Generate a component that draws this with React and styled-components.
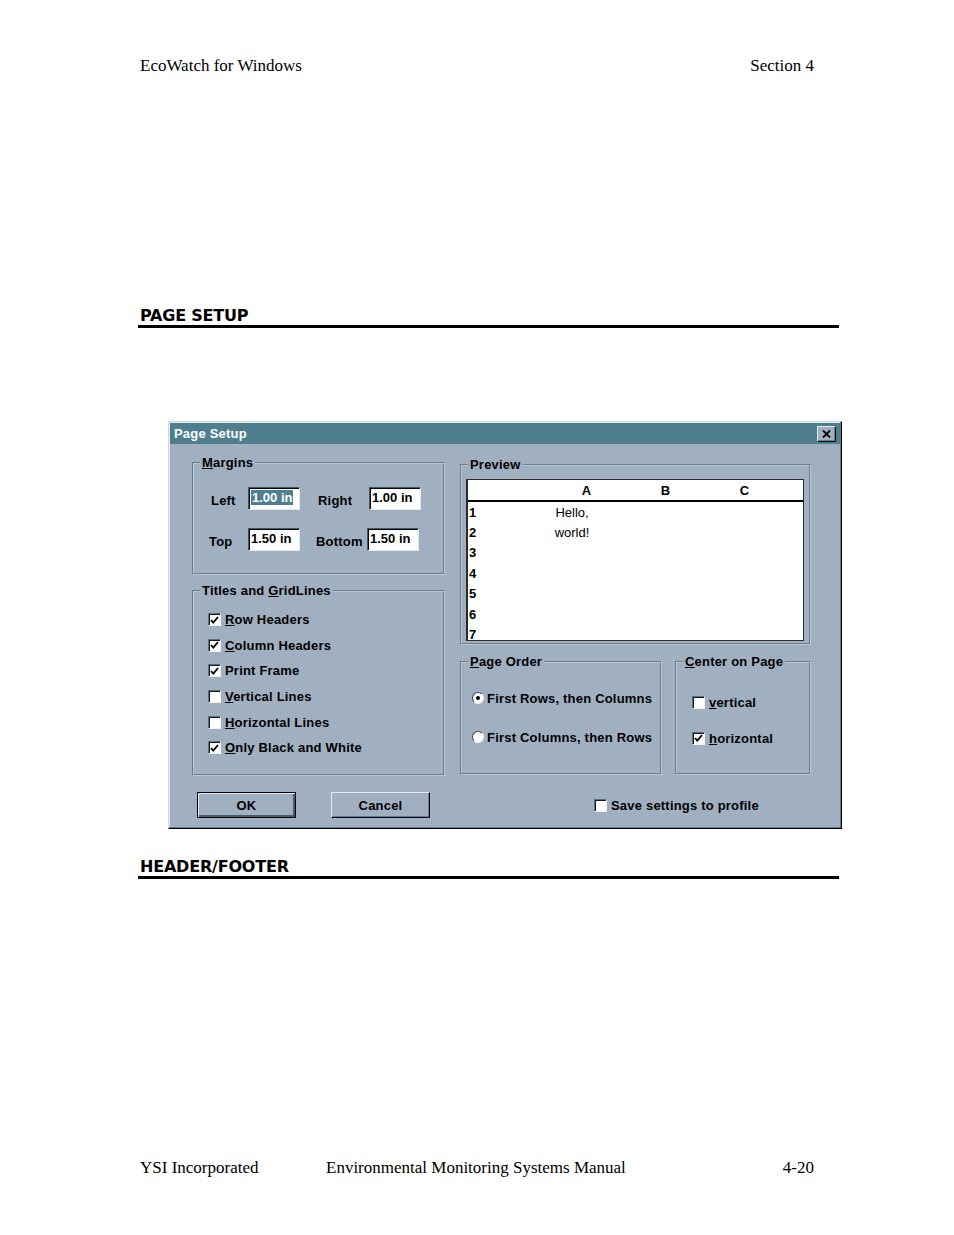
import React from "react";
import styled, { createGlobalStyle } from "styled-components";

const GlobalStyle = createGlobalStyle`
  html, body {
    margin: 0;
    padding: 0;
    background: #fff;
  }
`;

const FACE = "#a1b0c0";
const TITLE = "#4f7f8f";

const Page = styled.div`
  width: 954px;
  height: 1235px;
  box-sizing: border-box;
  padding: 56px 0 0 138px;
  background: #fff;
  color: #000;
  font-family: "Liberation Serif", "Times New Roman", serif;
  overflow: hidden;
`;

const RunningLine = styled.div`
  display: flex;
  width: 674px;
  margin: ${(p) => p.top || 0}px 0 0 2px;
  font-size: 17px;
  line-height: 20px;
  span:first-child {
    width: ${(p) => (p.wide ? "186px" : "auto")};
  }
  span:last-child {
    margin-left: auto;
  }
`;

const SectionHeading = styled.h2`
  width: 701px;
  box-sizing: border-box;
  margin: ${(p) => p.top}px 0 0 0;
  padding: 1px 0 0 2px;
  font: bold 16px/19px "DejaVu Sans", Verdana, sans-serif;
  letter-spacing: -0.2px;
  border-bottom: 3px solid #000;
`;

const Dialog = styled.div`
  width: 674px;
  height: 408px;
  box-sizing: border-box;
  margin: 93px 0 0 30px;
  padding: 1px;
  background: ${FACE};
  border: 1px solid;
  border-color: #cdd8e0 #000 #000 #cdd8e0;
  box-shadow: inset -1px -1px 0 #56808f, inset 1px 1px 0 #e6edf1;
  display: flex;
  flex-direction: column;
  font: bold 13px "Liberation Sans", Arial, sans-serif;
  letter-spacing: 0.2px;
  color: #000;
`;

const TitleBar = styled.div`
  height: 21px;
  flex: none;
  display: flex;
  align-items: center;
  padding: 0 4px;
  background: ${TITLE};
  color: #fff;
`;

const CloseButton = styled.div`
  margin-left: auto;
  width: 19px;
  height: 16px;
  box-sizing: border-box;
  background: ${FACE};
  border: 1px solid;
  border-color: #e4ebef #000 #000 #e4ebef;
  box-shadow: inset -1px -1px 0 #5f8493;
  display: flex;
  align-items: center;
  justify-content: center;
`;

const Body = styled.div`
  flex: 1;
  display: flex;
  flex-direction: column;
  padding: 11px 0 9px 22px;
`;

const Columns = styled.div`
  display: grid;
  grid-template-columns: 253px 351px;
  column-gap: 15px;
  height: 321px;
`;

const Stack = styled.div`
  display: flex;
  flex-direction: column;
  gap: ${(p) => p.gap}px;
  padding-top: ${(p) => p.offset || 0}px;
`;

const Pair = styled.div`
  display: flex;
  gap: 13px;
`;

const Group = styled.fieldset`
  margin: 0;
  padding: 0;
  min-width: 0;
  box-sizing: border-box;
  width: ${(p) => (p.w ? `${p.w}px` : "auto")};
  height: ${(p) => p.h}px;
  border: 2px groove #b4cad5;
`;

const Legend = styled.legend`
  margin-left: 6px;
  padding: 0 2px;
  line-height: 14px;
  font: inherit;
`;

const Inner = styled.div`
  padding: ${(p) => p.pad};
  display: flex;
  flex-direction: column;
  gap: ${(p) => p.gap || 0}px;
`;

const MarginGrid = styled.div`
  display: grid;
  grid-template-columns: 37px 70px 51px 52px;
  grid-auto-rows: 23px;
  row-gap: 18px;
  padding: 17px 0 0 17px;
`;

const FieldLabel = styled.span`
  padding-top: 6px;
  margin-left: ${(p) => p.shift || 0}px;
`;

const Field = styled.span`
  width: 52px;
  height: 23px;
  box-sizing: border-box;
  background: #fff;
  border: 1px solid;
  border-color: #3b5a66 #e3eaee #e3eaee #3b5a66;
  box-shadow: inset 1px 1px 0 #000;
  padding: 2px 0 0 2px;
  margin-left: ${(p) => p.shift || 0}px;
  line-height: 16px;
  letter-spacing: 0;
  white-space: nowrap;
  mark {
    background: ${TITLE};
    color: #fff;
    padding: 0 1px;
  }
`;

const Option = styled.div`
  display: flex;
  align-items: center;
  gap: ${(p) => p.gap || 4}px;
  height: ${(p) => p.h || 26}px;
  white-space: nowrap;
`;

const Box = styled.span`
  flex: none;
  width: 13px;
  height: 13px;
  box-sizing: border-box;
  background: #fff;
  border: 1px solid;
  border-color: #55737f #eef3f5 #eef3f5 #55737f;
  box-shadow: inset 1px 1px 0 #1a1a1a;
  display: flex;
  align-items: center;
  justify-content: center;
`;

const Radio = styled.span`
  flex: none;
  width: 12px;
  height: 12px;
  box-sizing: border-box;
  border-radius: 50%;
  background: #fff;
  border: 1px solid;
  border-color: #3a4a52 #eef3f5 #eef3f5 #3a4a52;
  display: flex;
  align-items: center;
  justify-content: center;
  &::after {
    content: "";
    width: 4px;
    height: 4px;
    border-radius: 50%;
    background: ${(p) => (p.on ? "#000" : "transparent")};
  }
`;

const Sheet = styled.div`
  margin: 7px 0 0 4px;
  width: 338px;
  height: 162px;
  box-sizing: border-box;
  background: #fff;
  border: 1px solid #2a2a2a;
  border-left-width: 2px;
  overflow: hidden;
  letter-spacing: 0;
`;

const SheetRow = styled.div`
  display: grid;
  grid-template-columns: 79px 79px 79px 79px 1fr;
  height: ${(p) => (p.head ? "20px" : "20.4px")};
  align-items: center;
  border-bottom: ${(p) => (p.head ? "2px solid #000" : "none")};
`;

const Cell = styled.span`
  text-align: ${(p) => (p.left ? "left" : "center")};
  padding-left: ${(p) => (p.left ? "1px" : "0")};
  padding-right: ${(p) => p.pr || 0}px;
  font-weight: ${(p) => (p.plain ? "normal" : "bold")};
`;

const Buttons = styled.div`
  display: flex;
  align-items: center;
  margin-top: 16px;
  padding-left: 5px;
`;

const Button = styled.div`
  width: 99px;
  height: 26px;
  box-sizing: border-box;
  display: flex;
  align-items: center;
  justify-content: center;
  margin-left: ${(p) => p.gap || 0}px;
  background: ${FACE};
  border: 1px solid;
  border-color: ${(p) =>
    p.primary ? "#000" : "#e4ebef #000 #000 #e4ebef"};
  box-shadow: ${(p) =>
    p.primary
      ? "inset 1px 1px 0 #e4ebef, inset -2px -2px 0 #3f5f6b"
      : "inset -1px -1px 0 #5f8493"};
`;

const SaveOption = styled(Option)`
  margin-left: 164px;
`;

const Check = () => (
  <svg width="9" height="8" viewBox="0 0 9 8">
    <polyline points="1,4 3.3,6.6 8,1" fill="none" stroke="#000" strokeWidth="1.8" />
  </svg>
);

const CheckBox = ({ on }) => <Box>{on && <Check />}</Box>;

const rows = [
  { n: "1", a: "Hello," },
  { n: "2", a: "world!" },
  { n: "3" },
  { n: "4" },
  { n: "5" },
  { n: "6" },
  { n: "7" },
];

const gridOptions = [
  { on: true, key: "R", rest: "ow Headers" },
  { on: true, key: "C", rest: "olumn Headers" },
  { on: true, key: "", rest: "Print Frame" },
  { on: false, key: "V", rest: "ertical Lines" },
  { on: false, key: "H", rest: "orizontal Lines" },
  { on: true, key: "O", rest: "nly Black and White" },
];

export default function App() {
  return (
    <Page>
      <GlobalStyle />
      <RunningLine>
        <span>EcoWatch for Windows</span>
        <span>Section 4</span>
      </RunningLine>

      <SectionHeading top={229}>PAGE SETUP</SectionHeading>

      <Dialog>
        <TitleBar>
          <span>Page Setup</span>
          <CloseButton>
            <svg width="9" height="8" viewBox="0 0 9 8">
              <path d="M1 0.5 L8 7.5 M8 0.5 L1 7.5" stroke="#000" strokeWidth="1.8" />
            </svg>
          </CloseButton>
        </TitleBar>

        <Body>
          <Columns>
            <Stack gap={8}>
              <Group h={120}>
                <Legend>
                  <u>M</u>argins
                </Legend>
                <MarginGrid>
                  <FieldLabel>Left</FieldLabel>
                  <Field>
                    <mark>1.00 in</mark>
                  </Field>
                  <FieldLabel>Right</FieldLabel>
                  <Field>1.00 in</Field>
                  <FieldLabel shift={-2}>Top</FieldLabel>
                  <Field>1.50 in</Field>
                  <FieldLabel shift={-2}>Bottom</FieldLabel>
                  <Field shift={-2}>1.50 in</Field>
                </MarginGrid>
              </Group>

              <Group h={193}>
                <Legend>
                  Titles and <u>G</u>ridLines
                </Legend>
                <Inner pad="9px 0 0 14px">
                  {gridOptions.map((o) => (
                    <Option key={o.rest} h={25.6}>
                      <CheckBox on={o.on} />
                      <span>
                        {o.key && <u>{o.key}</u>}
                        {o.rest}
                      </span>
                    </Option>
                  ))}
                </Inner>
              </Group>
            </Stack>

            <Stack gap={9} offset={2}>
              <Group h={188}>
                <Legend>Preview</Legend>
                <Sheet>
                  <SheetRow head>
                    <Cell />
                    <Cell>A</Cell>
                    <Cell>B</Cell>
                    <Cell>C</Cell>
                  </SheetRow>
                  {rows.map((r) => (
                    <SheetRow key={r.n}>
                      <Cell left>{r.n}</Cell>
                      <Cell plain pr={29}>
                        {r.a}
                      </Cell>
                    </SheetRow>
                  ))}
                </Sheet>
              </Group>

              <Pair>
                <Group h={121} w={202}>
                  <Legend>
                    <u>P</u>age Order
                  </Legend>
                  <Inner pad="16px 0 0 10px" gap={13}>
                    <Option gap={3}>
                      <Radio on />
                      <span>First Rows, then Columns</span>
                    </Option>
                    <Option gap={3}>
                      <Radio />
                      <span>First Columns, then Rows</span>
                    </Option>
                  </Inner>
                </Group>

                <Group h={121} w={136}>
                  <Legend>
                    <u>C</u>enter on Page
                  </Legend>
                  <Inner pad="20px 0 0 15px" gap={10}>
                    <Option>
                      <CheckBox />
                      <span>
                        <u>v</u>ertical
                      </span>
                    </Option>
                    <Option>
                      <CheckBox on />
                      <span>
                        <u>h</u>orizontal
                      </span>
                    </Option>
                  </Inner>
                </Group>
              </Pair>
            </Stack>
          </Columns>

          <Buttons>
            <Button primary>OK</Button>
            <Button gap={35}>Cancel</Button>
            <SaveOption>
              <CheckBox />
              <span>Save settings to profile</span>
            </SaveOption>
          </Buttons>
        </Body>
      </Dialog>

      <SectionHeading top={27}>HEADER/FOOTER</SectionHeading>

      <RunningLine top={279} wide>
        <span>YSI Incorporated</span>
        <span>Environmental Monitoring Systems Manual</span>
        <span>4-20</span>
      </RunningLine>
    </Page>
  );
}
